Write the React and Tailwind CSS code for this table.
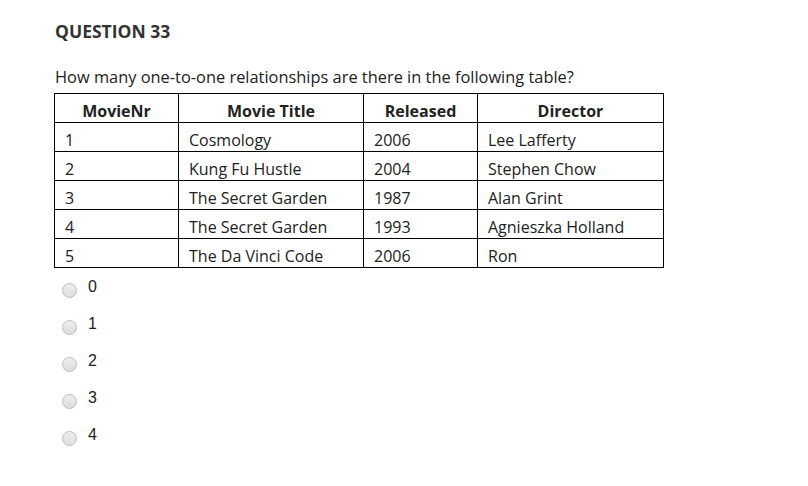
const rows = [
  ["1", "Cosmology", "2006", "Lee Lafferty"],
  ["2", "Kung Fu Hustle", "2004", "Stephen Chow"],
  ["3", "The Secret Garden", "1987", "Alan Grint"],
  ["4", "The Secret Garden", "1993", "Agnieszka Holland"],
  ["5", "The Da Vinci Code", "2006", "Ron"],
];

const options = ["0", "1", "2", "3", "4"];

export default function App() {
  return (
    <div className="w-[808px] h-[486px] bg-white pl-[55px] pt-[20px] font-['Open_Sans',sans-serif] text-[#333]">
      <h2 className="text-[17.5px] font-bold leading-[22px] text-[#333]">QUESTION 33</h2>
      <p className="mt-[24px] text-[16.4px] leading-[22px] text-[#222]">
        How many one-to-one relationships are there in the following table?
      </p>
      <table className="mt-[5px] -ml-px border-collapse text-[16px] leading-[22px] text-[#222]">
        <thead>
          <tr className="h-[29px]">
            <th className="w-[124px] border border-black p-0 align-bottom font-bold">MovieNr</th>
            <th className="w-[185px] border border-black p-0 align-bottom font-bold">Movie Title</th>
            <th className="w-[114px] border border-black p-0 align-bottom font-bold">Released</th>
            <th className="w-[186px] border border-black p-0 align-bottom font-bold">Director</th>
          </tr>
        </thead>
        <tbody>
          {rows.map((r) => (
            <tr key={r[0]} className="h-[29px]">
              {r.map((c, i) => (
                <td key={i} className="border border-black px-[10px] py-0 align-bottom">
                  {c}
                </td>
              ))}
            </tr>
          ))}
        </tbody>
      </table>
      <div className="mt-[9px] ml-[7px] flex flex-col gap-[17px] font-['Liberation_Sans',Arial,sans-serif] text-[16px] text-[#222]">
        {options.map((o) => (
          <label key={o} className="flex items-center h-[20px]">
            <span className="w-[15px] h-[15px] rounded-full border border-[#bdbdbd] bg-gradient-to-b from-[#eee] to-[#ddd] mt-[6px]" />
            <span className="ml-[11px]">{o}</span>
          </label>
        ))}
      </div>
    </div>
  );
}
